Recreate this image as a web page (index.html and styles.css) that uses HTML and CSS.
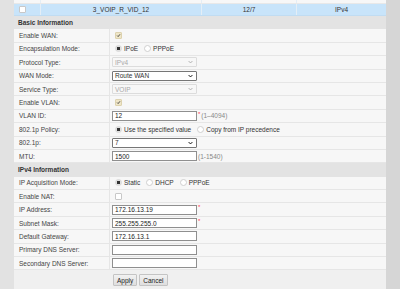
FILE: index.html
```html
<!DOCTYPE html>
<html>
<head>
<meta charset="utf-8">
<link rel="stylesheet" href="styles.css">
</head>
<body>
<div class="page">
  <div class="leftbar"></div>
  <div class="main">
    <div class="list">
      <div class="lrow partial">
        <div class="lc c1"></div><div class="lc c2"></div><div class="lc c3"></div><div class="lc c4"></div>
      </div>
      <div class="lrow sel">
        <div class="lc c1"><span class="cb white"></span></div>
        <div class="lc c2">3_VOIP_R_VID_12</div>
        <div class="lc c3">12/7</div>
        <div class="lc c4">IPv4</div>
      </div>
    </div>

    <div class="section">Basic Information</div>
    <div class="row"><div class="lab">Enable WAN:</div><div class="val"><span class="cb checked"><svg viewBox="0 0 7 7" class="tick"><path d="M1.6 3.6 L3 5 L5.6 1.8" /></svg></span></div></div>
    <div class="row"><div class="lab">Encapsulation Mode:</div><div class="val"><span class="rd on"></span><span class="rl">IPoE</span><span class="rd"></span><span class="rl">PPPoE</span></div></div>
    <div class="row"><div class="lab">Protocol Type:</div><div class="val"><div class="sel-box dis"><span>IPv4</span><svg viewBox="0 0 8 5" class="chev"><path d="M1 1 L4 4 L7 1"/></svg></div></div></div>
    <div class="row"><div class="lab">WAN Mode:</div><div class="val"><div class="sel-box"><span>Route WAN</span><svg viewBox="0 0 8 5" class="chev"><path d="M1 1 L4 4 L7 1"/></svg></div></div></div>
    <div class="row"><div class="lab">Service Type:</div><div class="val"><div class="sel-box dis"><span>VOIP</span><svg viewBox="0 0 8 5" class="chev"><path d="M1 1 L4 4 L7 1"/></svg></div></div></div>
    <div class="row"><div class="lab">Enable VLAN:</div><div class="val"><span class="cb checked"><svg viewBox="0 0 7 7" class="tick"><path d="M1.6 3.6 L3 5 L5.6 1.8" /></svg></span></div></div>
    <div class="row"><div class="lab">VLAN ID:</div><div class="val"><div class="inp">12</div><span class="req">*</span><span class="hint">(1–4094)</span></div></div>
    <div class="row"><div class="lab">802.1p Policy:</div><div class="val"><span class="rd on"></span><span class="rl">Use the specified value</span><span class="rd"></span><span class="rl">Copy from IP precedence</span></div></div>
    <div class="row"><div class="lab">802.1p:</div><div class="val"><div class="sel-box"><span>7</span><svg viewBox="0 0 8 5" class="chev"><path d="M1 1 L4 4 L7 1"/></svg></div></div></div>
    <div class="row"><div class="lab">MTU:</div><div class="val"><div class="inp">1500</div><span class="hint">(1-1540)</span></div></div>

    <div class="section">IPv4 Information</div>
    <div class="row"><div class="lab">IP Acquisition Mode:</div><div class="val"><span class="rd on"></span><span class="rl">Static</span><span class="rd"></span><span class="rl">DHCP</span><span class="rd"></span><span class="rl">PPPoE</span></div></div>
    <div class="row"><div class="lab">Enable NAT:</div><div class="val"><span class="cb white"></span></div></div>
    <div class="row"><div class="lab">IP Address:</div><div class="val"><div class="inp">172.16.13.19</div><span class="req">*</span></div></div>
    <div class="row"><div class="lab">Subnet Mask:</div><div class="val"><div class="inp">255.255.255.0</div><span class="req">*</span></div></div>
    <div class="row"><div class="lab">Default Gateway:</div><div class="val"><div class="inp">172.16.13.1</div></div></div>
    <div class="row"><div class="lab">Primary DNS Server:</div><div class="val"><div class="inp"></div></div></div>
    <div class="row"><div class="lab">Secondary DNS Server:</div><div class="val"><div class="inp"></div></div></div>

    <div class="buttons">
      <span class="btn">Apply</span><span class="btn">Cancel</span>
    </div>
  </div>
  <div class="scroll"></div>
</div>
</body>
</html>
```
FILE: styles.css
```css
html, body {
  margin: 0;
  padding: 0;
}
body {
  width: 400px;
  height: 289px;
  overflow: hidden;
  font-family: "Liberation Sans", Arial, sans-serif;
  font-size: 6.5px;
  color: #333;
  background: #f0f0f0;
}
.page {
  display: flex;
  height: 289px;
}
.leftbar {
  width: 14px;
  flex: none;
  background: #e2e2e2;
}
.scroll {
  width: 14px;
  flex: none;
  background: #d6d6d6;
}
.main {
  width: 372px;
  flex: none;
  background: #f0f0f0;
  display: flex;
  flex-direction: column;
}
.lrow {
  display: flex;
}
.lrow.partial {
  height: 3px;
  background: #f7f7f7;
  border-bottom: 1px solid #e8e8e8;
}
.lrow.sel {
  height: 11px;
  background: #c8e4fa;
  border-bottom: 1px solid #c0dcf2;
}
.lc {
  display: flex;
  align-items: center;
  justify-content: center;
  border-right: 1px solid #e4eef6;
  box-sizing: border-box;
}
.c1 { width: 27px; justify-content: flex-start; padding-left: 5px; }
.c2 { width: 161px; }
.c3 { width: 95px; }
.c4 { flex: 1; border-right: none; }
.section {
  height: 13.4px;
  box-sizing: border-box;
  background: #e3e3e3;
  font-weight: bold;
  padding-left: 4px;
  display: flex;
  align-items: center;
  color: #333;
}
.row {
  height: 13.4px;
  box-sizing: border-box;
  display: flex;
  background: #f7f7f7;
  border-bottom: 1px solid #e6e6e6;
}
.lab {
  width: 96px;
  box-sizing: border-box;
  padding-left: 5px;
  border-right: 1px solid #e6e6e6;
  display: flex;
  align-items: center;
  color: #444;
}
.val {
  flex: 1;
  padding-left: 2px;
  display: flex;
  align-items: center;
}
.cb {
  width: 7px;
  height: 7px;
  box-sizing: border-box;
  margin-left: 3px;
  border: 1px solid #c8c8c8;
  border-radius: 1px;
  background: #fff;
  display: inline-flex;
}
.lc .cb { margin-left: 0; }
.cb.checked {
  background: #efe6c8;
  border-color: #ddd2ae;
}
.tick {
  width: 5px;
  height: 5px;
  fill: none;
  stroke: #333;
  stroke-width: 1.2;
}
.rd {
  width: 7px;
  height: 7px;
  box-sizing: border-box;
  border-radius: 50%;
  border: 1px solid #d0d0d0;
  background: #fff;
  margin-left: 3px;
  margin-right: 2px;
  flex: none;
}
.rd.on {
  background: radial-gradient(circle, #333 0 1.5px, #e0e0e0 1.8px);
  border-color: #d8d8d8;
}
.rl {
  margin-right: 3px;
}
.sel-box {
  width: 85px;
  height: 10px;
  box-sizing: border-box;
  border: 1px solid #767676;
  background: #fff;
  display: flex;
  align-items: center;
  justify-content: space-between;
  padding: 0 3px 0 2px;
  border-radius: 1px;
}
.sel-box.dis {
  background: #f7f7f7;
  border-color: #dcdcdc;
  color: #a8a8a8;
}
.chev {
  width: 5px;
  height: 4px;
  fill: none;
  stroke: #111;
  stroke-width: 1.6;
}
.dis .chev {
  stroke: #b0b0b0;
}
.inp {
  width: 85px;
  height: 10px;
  box-sizing: border-box;
  border: 1px solid #8f8f8f;
  background: #fff;
  padding-left: 2px;
  display: flex;
  align-items: center;
  color: #222;
}
.req {
  color: #ff3050;
  align-self: flex-start;
  margin-top: 1px;
  margin-left: 1px;
  font-size: 6px;
}
.hint {
  color: #888;
  margin-left: 1px;
}
.buttons {
  display: flex;
  gap: 2px;
  padding: 4px 0 0 99px;
}
.btn {
  height: 12px;
  box-sizing: border-box;
  padding: 0 3px;
  border: 1px solid #c4c4c4;
  border-radius: 1px;
  background: linear-gradient(#f2f2f2, #dedede);
  display: inline-flex;
  align-items: center;
  color: #222;
}
```
